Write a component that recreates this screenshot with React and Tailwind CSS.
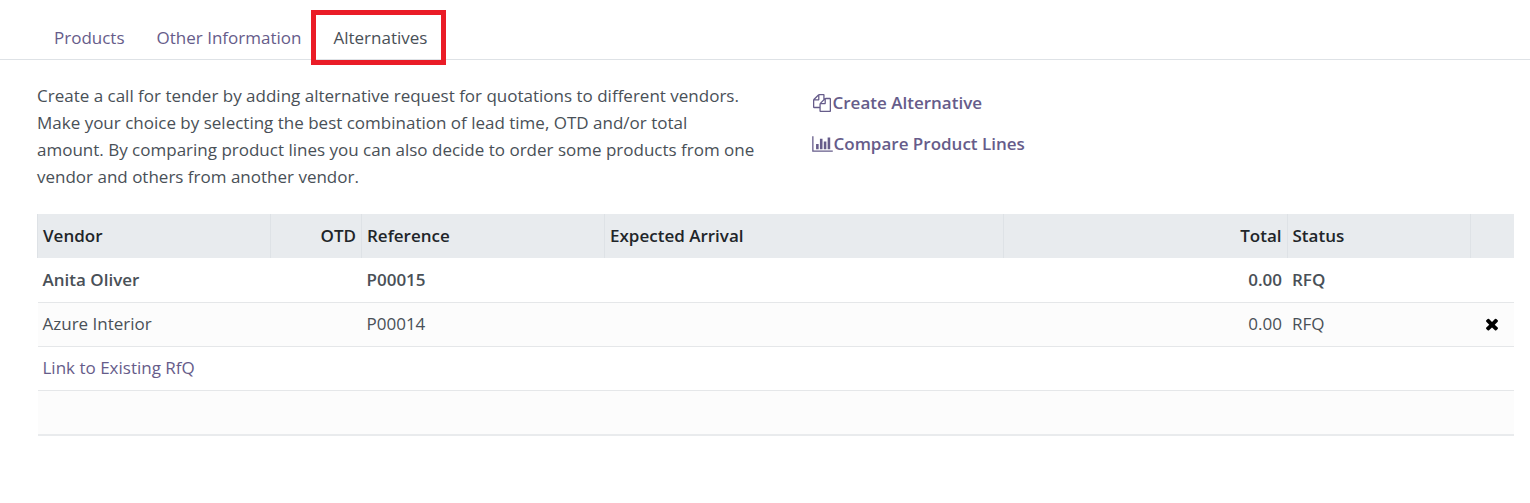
import { useState } from "react";
import clsx from "clsx";


const tabs = ["Products", "Other Information", "Alternatives"];

const initialOrders = [
    { vendor: "Anita Oliver", reference: "P00015", total: "0.00", status: "RFQ", current: true },
    { vendor: "Azure Interior", reference: "P00014", total: "0.00", status: "RFQ", current: false },
];


function CopyIcon() {
    return (
        <svg className="h-[18px] w-[18px]" viewBox="0 0 1792 1792" fill="currentColor" aria-hidden="true">
            <path d="M1696 384q40 0 68 28t28 68v1216q0 40-28 68t-68 28h-960q-40 0-68-28t-28-68v-288h-544q-40 0-68-28t-28-68v-672q0-40 20-88t48-76l408-408q28-28 76-48t88-20h416q40 0 68 28t28 68v328q68-40 128-40h416zm-544 213l-299 299h299v-299zm-640-384l-299 299h299v-299zm196 647l316-316v-416h-384v416q0 40-28 68t-68 28h-416v640h512v-256q0-40 20-88t48-76zm956 804v-1152h-384v416q0 40-28 68t-68 28h-416v640h896z" />
        </svg>
    );
}

function ChartIcon() {
    return (
        <svg className="h-[18px] w-[21px]" viewBox="0 0 2048 1792" fill="currentColor" aria-hidden="true">
            <path d="M640 896v512h-256v-512h256zm384-512v1024h-256v-1024h256zm1024 1152v128h-2048v-1536h128v1408h1920zm-640-896v768h-256v-768h256zm384-384v1152h-256v-1152h256z" />
        </svg>
    );
}

function CrossIcon() {
    return (
        <svg className="h-[18px] w-[18px]" viewBox="0 0 1792 1792" fill="currentColor" aria-hidden="true">
            <path d="M1490 1322q0 40-28 68l-136 136q-28 28-68 28t-68-28l-294-294-294 294q-28 28-68 28t-68-28l-136-136q-28-28-28-68t28-68l294-294-294-294q-28-28-28-68t28-68l136-136q28-28 68-28t68 28l294 294 294-294q28-28 68-28t68 28l136 136q28 28 28 68t-28 68l-294 294 294 294q28 28 28 68z" />
        </svg>
    );
}


function App() {

    const [active, setActive] = useState("Alternatives");
    const [orders, setOrders] = useState(initialOrders);

    const unlink = (reference) => {
        setOrders(orders.filter((order) => order.reference !== reference));
    };

    return (
        <div className="bg-white font-['Open_Sans','Noto_Sans',sans-serif] text-[17px] text-[#495057]">
            {/* tabs */}
            <div role="tablist" className="flex h-[60px] items-end border-b border-[#dee2e6] pl-[38px]">
                {tabs.map((tab) => (
                    <button
                        key={tab}
                        type="button"
                        role="tab"
                        aria-selected={active === tab}
                        onClick={() => setActive(tab)}
                        className={clsx(
                            "relative h-[42px] px-4",
                            active === tab ? "text-[#495057]" : "text-[#665c8a]"
                        )}
                    >
                        {tab}
                        {active === tab && (
                            <span className="absolute -top-[7px] -right-[3px] -bottom-[6px] -left-[6px] border-5 border-[#ea1c27]" />
                        )}
                    </button>
                ))}
            </div>

            <div className="pr-4 pl-[37px]">
                {/* description + actions */}
                <div className="grid grid-cols-2 pt-[22px]">
                    <p className="pr-5 leading-[27px]">
                        Create a call for tender by adding alternative request for quotations to different vendors.
                        Make your choice by selecting the best combination of lead time, OTD and/or total
                        amount. By comparing product lines you can also decide to order some products from one
                        vendor and others from another vendor.
                    </p>
                    <div className="flex flex-col items-start gap-[14px] pt-[7px] pl-9 font-semibold text-[#665c8a]">
                        <button type="button" className="flex h-[27px] items-center gap-[2px] pl-px">
                            <CopyIcon />
                            Create Alternative
                        </button>
                        <button type="button" className="flex h-[27px] items-center gap-px">
                            <ChartIcon />
                            Compare Product Lines
                        </button>
                    </div>
                </div>

                {/* linked orders */}
                <table className="mt-6 w-full table-fixed">
                    <thead className="bg-[#e8ebee] text-[#212529]">
                        <tr className="h-11 text-left *:border-l *:border-[#dee2e6] *:px-[5px] *:font-semibold">
                            <th className="w-[233px]">Vendor</th>
                            <th className="w-[91px] text-right">OTD</th>
                            <th className="w-[243px]">Reference</th>
                            <th>Expected Arrival</th>
                            <th className="w-[284px] text-right">Total</th>
                            <th className="w-[183px]">Status</th>
                            <th className="w-[44px]"></th>
                        </tr>
                    </thead>
                    <tbody className="border-b-2 border-[#e9ebed]">
                        {orders.map((order) => (
                            <tr
                                key={order.reference}
                                className={clsx(
                                    "h-11 border-b border-[#e5e7e9] *:px-[5px]",
                                    order.current ? "font-semibold" : "bg-[#fcfcfc]"
                                )}
                            >
                                <td>{order.vendor}</td>
                                <td></td>
                                <td>{order.reference}</td>
                                <td></td>
                                <td className="text-right">{order.total}</td>
                                <td>{order.status}</td>
                                <td>
                                    {!order.current && (
                                        <button
                                            type="button"
                                            aria-label="Unlink"
                                            onClick={() => unlink(order.reference)}
                                            className="mx-auto block text-black"
                                        >
                                            <CrossIcon />
                                        </button>
                                    )}
                                </td>
                            </tr>
                        ))}
                        <tr className="h-11 border-b border-[#e5e7e9]">
                            <td colSpan="7" className="px-[5px]">
                                <a href="#link" className="text-[#665c8a]">Link to Existing RfQ</a>
                            </td>
                        </tr>
                        <tr className="h-[45px] bg-[#fcfcfc]">
                            <td colSpan="7"></td>
                        </tr>
                    </tbody>
                </table>
            </div>
        </div>
    );
}

export default App;
